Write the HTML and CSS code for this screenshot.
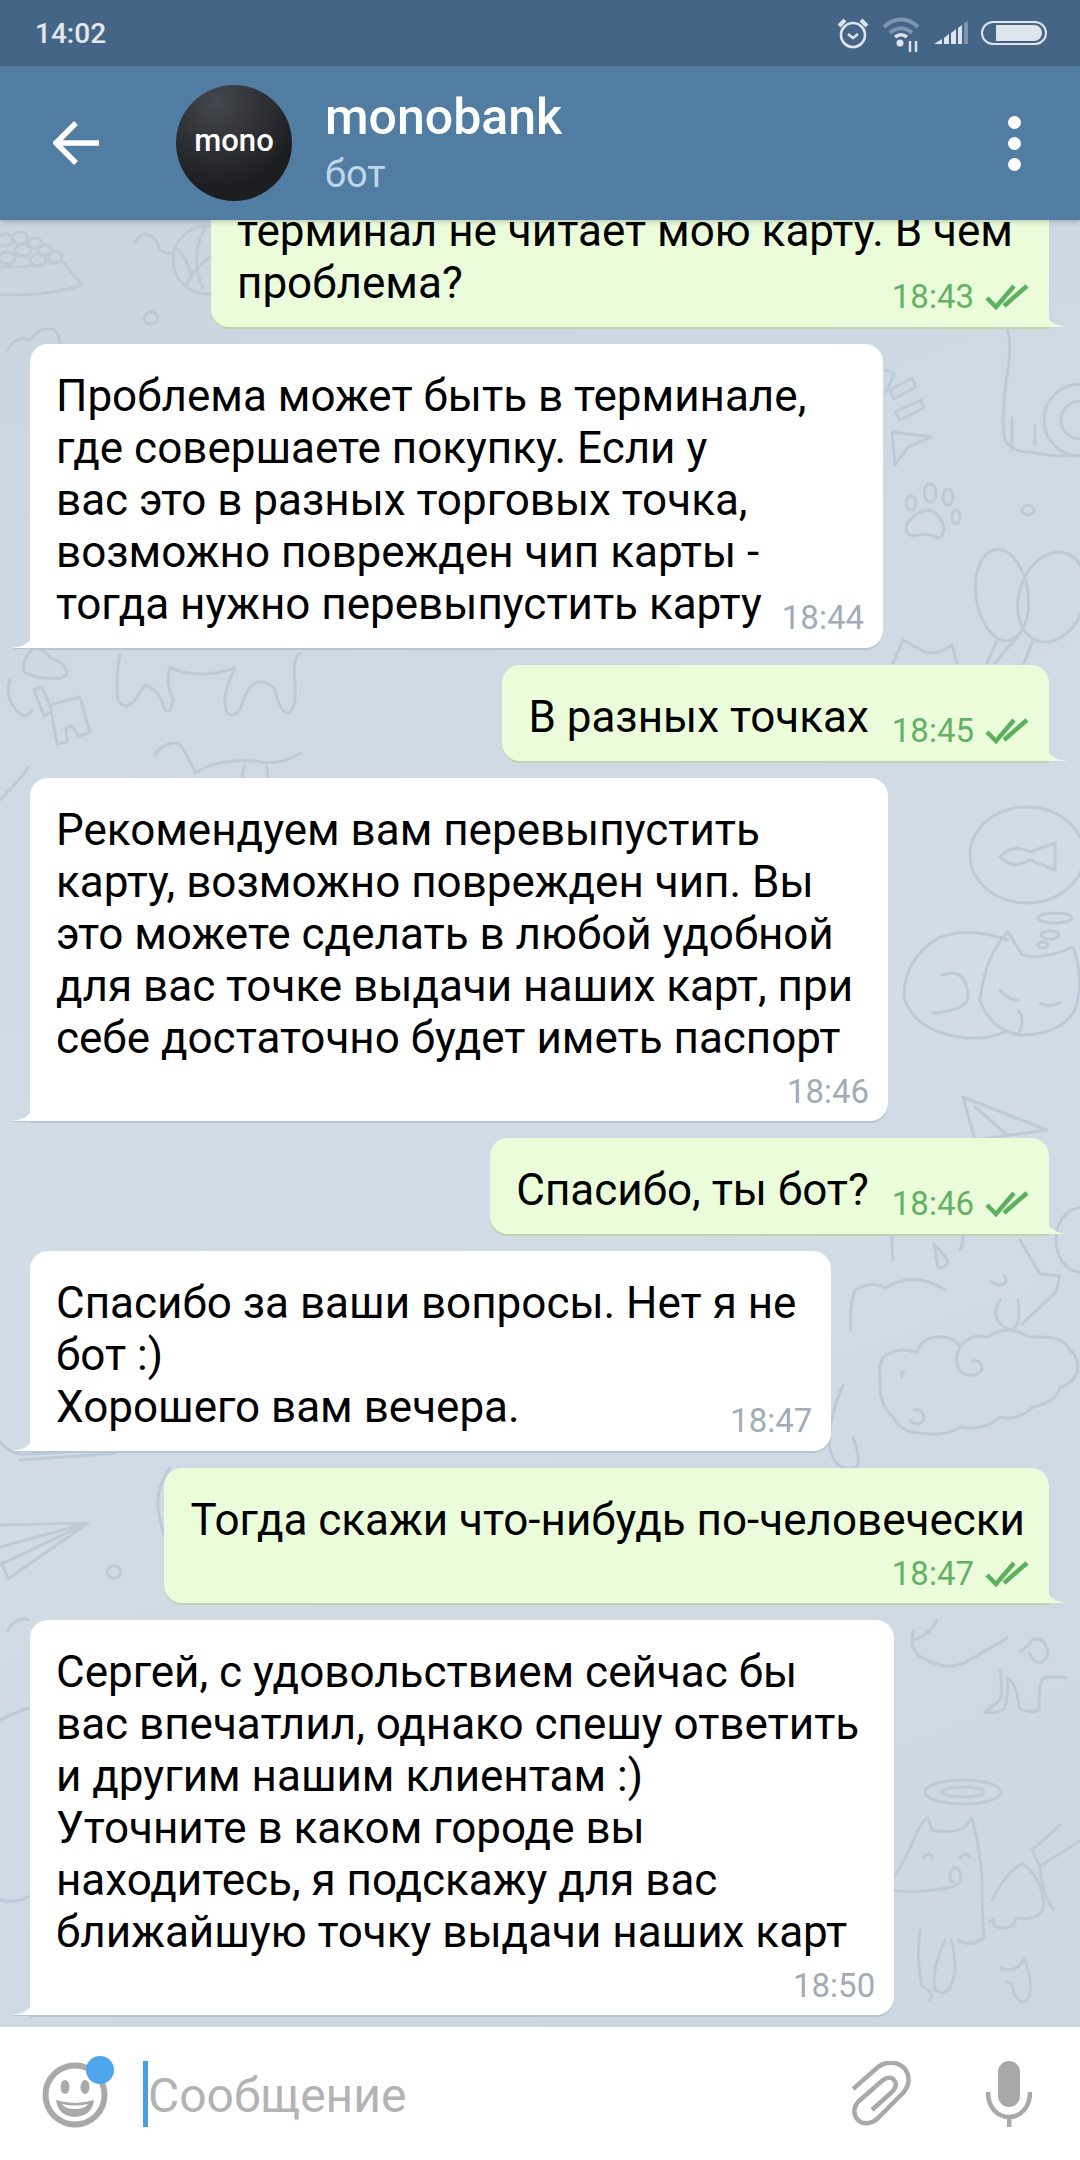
FILE: index.html
```html
<!DOCTYPE html>
<html lang="ru">
<head>
    <meta charset="UTF-8">
    <title>monobank</title>
    <link rel="stylesheet" href="styles.css">
</head>
<body>
    <div class="status-bar">
        <span class="clock">14:02</span>
        <div class="status-icons">
            <svg width="34" height="34" viewBox="0 0 34 34" fill="none" stroke="#dfe5ec">
                <circle cx="17" cy="19" r="12" stroke-width="2.6"/>
                <path d="M12 18l5 4 5-4" stroke-width="2.6"/>
                <path d="M3 10l6-6M31 10l-6-6" stroke-width="4"/>
            </svg>
            <svg width="38" height="38" viewBox="0 0 38 38" fill="none">
                <path d="M1 13c10-10 24-10 34 0" stroke="#7d95ad" stroke-width="4"/>
                <path d="M7 19c7-6 15-6 22 0" stroke="#7d95ad" stroke-width="4"/>
                <path d="M12 23c4-3 8-3 12 0" stroke="#dfe5ec" stroke-width="3.5"/>
                <circle cx="17" cy="29" r="3.5" fill="#dfe5ec"/>
                <path d="M27 27v11M33 27v11" stroke="#dfe5ec" stroke-width="2.5"/>
            </svg>
            <svg width="34" height="24" viewBox="0 0 34 24">
                <path d="M0 23l8-5v5zM10 17l5-4v10h-5zM17 12l5-4v15h-5zM24 7l4-3v19h-4z" fill="#dfe5ec"/>
                <path d="M30 2l4-2v23h-4z" fill="#7d95ad"/>
            </svg>
            <div class="battery"><div class="battery-fill"></div></div>
        </div>
    </div>

    <header class="top-bar">
        <svg class="back" width="46" height="44" viewBox="0 0 46 44" fill="none" stroke="#fff" stroke-width="5.5">
            <path d="M46 22H4M23 2L3 22l20 20"/>
        </svg>
        <div class="avatar">mono</div>
        <div class="peer">
            <div class="peer-name">monobank</div>
            <div class="peer-status">бот</div>
        </div>
        <div class="dots"><i></i><i></i><i></i></div>
    </header>

    <main class="chat">
        <svg class="doodles" viewBox="0 220 1080 1807" fill="none" stroke="#bdcbd8" stroke-width="3" stroke-linecap="round" stroke-linejoin="round">
            <!-- bowl and yarn -->
            <path d="M0 267q30 1 62-6l20 24q-32 11-82 10"/>
            <ellipse cx="7" cy="258" rx="8" ry="6"/><ellipse cx="23" cy="250" rx="8" ry="6"/><ellipse cx="38" cy="260" rx="8" ry="6"/>
            <ellipse cx="20" cy="238" rx="8" ry="6"/><ellipse cx="35" cy="243" rx="7" ry="5"/><ellipse cx="45" cy="250" rx="7" ry="5"/>
            <ellipse cx="55" cy="257" rx="7" ry="6"/><ellipse cx="5" cy="240" rx="8" ry="6"/>
            <circle cx="207" cy="260" r="34"/>
            <path d="M135 243q5-11 15-8 8 5 10 15 5 5 13 2M205 228q-16 30-2 60M226 252q-28 6-40 34M176 248q10 6 16 30"/>
            <ellipse cx="151" cy="318" rx="7" ry="6"/>
            <path d="M8 350q7-15 22-10 10-15 25-10 7 10 5 20"/>
            <!-- fish bones, paw, cat leg -->
            <path d="M886 370l8 4-8 18M890 390l22-12 4 9-22 12zM895 412l26-12 3 8-24 12z"/>
            <path d="M892 432l39 5-23 10-13 18z"/>
            <path d="M908 522q14-16 26-10 14 12 8 24l-4 2q-12-6-24-2-12-2-6-14z"/>
            <ellipse cx="911" cy="503" rx="5" ry="7"/><ellipse cx="930" cy="493" rx="6" ry="9"/><ellipse cx="948" cy="497" rx="5" ry="8"/><ellipse cx="956" cy="517" rx="4" ry="7"/>
            <path d="M1007 330q5 10 1 40-8 50-3 70 7 12 25 12 30 6 50 3M1012 418v32M1035 425v20"/>
            <circle cx="1080" cy="420" r="36"/><circle cx="1080" cy="420" r="19"/>
            <ellipse cx="1028" cy="510" rx="6" ry="5"/>
            <ellipse cx="1002" cy="595" rx="26" ry="46" transform="rotate(-8 1002 595)"/>
            <ellipse cx="1052" cy="597" rx="33" ry="46" transform="rotate(18 1052 597)"/>
            <path d="M997 640l-10 23M1017 637l-22 26M1033 640l-9 23"/>
            <path d="M893 663l10-23 22 12q15 3 27-7l5 18"/>
            <!-- cat and fish -->
            <ellipse cx="1027" cy="855" rx="57" ry="48"/>
            <path d="M1000 857q12-14 30-5l25-9v27l-25-10q-18 10-30-3z"/>
            <ellipse cx="1055" cy="918" rx="17" ry="5"/><ellipse cx="1050" cy="935" rx="9" ry="4"/><ellipse cx="1043" cy="945" rx="5" ry="3"/>
            <path d="M1008 940q-40-14-70-2-35 22-34 60 10 30 50 38 30 6 50-4"/>
            <path d="M980 1000q5-45 28-68l14 23q23 5 51-8 12 33 2 63-15 25-55 25-30-5-40-35z"/>
            <path d="M1000 990q8 10 18 10M1040 1003q10 5 20 0M1018 1010q8 10 0 25"/>
            <path d="M942 975q24-8 26 20 2 15-35 18"/>
            <path d="M963 1097l84 33-72 10zM975 1107l30 26"/>
            <!-- dog on a cloud -->
            <path d="M880 1377q-2-20 10-24 12-6 27 0 5-18 27-16 12 2 16 10 10-14 27-10 18-12 36-3 4 4 24 3 18 2 23 13 10 8 7 23-6 12-17 14-4 16-27 20-14 14-33 10-14 14-40 10-14 10-40 6-18 0-27-16-12-10-13-30z"/>
            <path d="M960 1347q-8 14 2 26 14 6 20-4 0-10-10-8M902 1377q-2-8 2-4M910 1420q6 8 14 0 0-12-10-10"/>
            <path d="M855 1290q18-10 30-2 30-18 60 2M855 1290q-6 18-4 40M895 1218q-5 22-2 42M938 1268l-4-24 12 14q5 8-8 10zM960 1250q5-8 2-20M992 1282q8 6 14 0 0-6-2-6M1020 1240l20 34 20 2-4 16-34 32M1000 1300q-12 20 10 30 12-2 8-30M843 1385q-14 30-14 60 6 30 28 22 4-8-4-30"/>
            <ellipse cx="1080" cy="1240" rx="24" ry="32"/>
            <!-- dog, bone, halo and angel -->
            <path d="M913 1632q-4 20 10 26 26 16 50 0 24-14 34-20M1000 1670q3 20 0 30-12 10-15 12 14 2 20-4 4-20 2-30 10 4 12 30 10 6 20 2 0-30 5-32 12-2 22 0M1020 1652q8-6 12-12 10-4 14 6 6 8-4 16-8 2-12-8"/>
            <path d="M913 1640q16-4 24-20"/>
            <ellipse cx="963" cy="1792" rx="38" ry="12"/><ellipse cx="963" cy="1792" rx="21" ry="5"/>
            <path d="M892 1880q14-20 24-46 8-16 12-16l4 12q20 4 32-2l8-10q8 30 10 60 0 40 2 60-14 10-26 2"/>
            <path d="M892 1890q20 4 55-2 12-2 14-8 0-14-8-12-6 10 0 14M923 1858q6-8 10 0M960 1858q6-8 10 0"/>
            <path d="M992 1900q16-30 30-36 18 10 22 40-2 18-28 14-2 14-22 8 0-10-4-4M1000 1968q18 6 24-10 8 20 6 36-6 16-16 0-2-14-8-12"/>
            <path d="M920 1930q-4 30 2 56 12 6 8 14M945 1940q-14 30-10 50 16 10 20-20 0-20-4-30M1060 1825l-28 25 8 16 40-25M1040 1866q2 30 14 44"/>
            <!-- left side -->
            <path d="M120 655q-5 25-2 45 7 12 17 0l10-15q15 5 20 25 5 5 8-10-8-20-3-32 30 12 65 0-15 30-8 45 8 6 14-6 5-18 14-24 10-4 20 6 5 25 14 24 8-6 6-30-3-25 5-30"/>
            <path d="M24 672q-2-14 8-22l4-4q10 6 14 12 16 4 17 16l-6 4q-22 2-37-6zM34 690l8-3 10 24-8 5zM10 680q-6 18 8 32 8 8 14-2"/>
            <path d="M50 705l30-8 10 36-12 3-6-10-6 2 1 14-10 2z"/>
            <path d="M155 755q6-12 24-12 10 14 16 30 20-14 60-12 22 6 46-8M245 765q-8 16 10 22 16 2 12-20"/>
            <path d="M0 800q20-20 28-32"/>
            <path d="M0 1442q8 10 20 12 60 0 82-10l6-12q10 6 16 14-4 8-18 8-60 4-86 6"/>
            <path d="M0 1525l88-2-80 56-6-16M0 1547l88-24M0 1565l88-42"/>
            <ellipse cx="114" cy="1572" rx="7" ry="6"/>
            <path d="M170 1468q-14 20-12 40 4 30 14 42M8 1630q8-14 20-10M0 1720q20-10 30-12M0 1900q14 4 30-4"/>
        </svg>

        <div class="bubble out wide">
            <div>терминал не читает мою карту. В чем<br>
                <span class="meta"><span class="time">18:43</span><svg class="ticks" viewBox="0 0 44 26"><path d="M2 14l9 9L29 2M19 22L42 2"/></svg></span>проблема?</div>
        </div>

        <div class="bubble in">
            <div>Проблема может быть в терминале,<br>где совершаете покупку. Если у<br>вас это в разных торговых точка,<br>возможно поврежден чип карты -<br>
                <span class="meta"><span class="time">18:44</span></span>тогда нужно перевыпустить карту</div>
        </div>

        <div class="bubble out">
            <div><span class="meta"><span class="time">18:45</span><svg class="ticks" viewBox="0 0 44 26"><path d="M2 14l9 9L29 2M19 22L42 2"/></svg></span>В разных точках</div>
        </div>

        <div class="bubble in">
            <div>Рекомендуем вам перевыпустить<br>карту, возможно поврежден чип. Вы<br>это можете сделать в любой удобной<br>для вас точке выдачи наших карт, при<br>себе достаточно будет иметь паспорт</div>
            <div class="meta below"><span class="time">18:46</span></div>
        </div>

        <div class="bubble out">
            <div><span class="meta"><span class="time">18:46</span><svg class="ticks" viewBox="0 0 44 26"><path d="M2 14l9 9L29 2M19 22L42 2"/></svg></span>Спасибо, ты бот?</div>
        </div>

        <div class="bubble in">
            <div>Спасибо за ваши вопросы. Нет я не<br>бот :)<br>
                <span class="meta"><span class="time">18:47</span></span>Хорошего вам вечера.</div>
        </div>

        <div class="bubble out">
            <div>Тогда скажи что-нибудь по-человечески</div>
            <div class="meta below"><span class="time">18:47</span><svg class="ticks" viewBox="0 0 44 26"><path d="M2 14l9 9L29 2M19 22L42 2"/></svg></div>
        </div>

        <div class="bubble in">
            <div>Сергей, с удовольствием сейчас бы<br>вас впечатлил, однако спешу ответить<br>и другим нашим клиентам :)<br>Уточните в каком городе вы<br>находитесь, я подскажу для вас<br>ближайшую точку выдачи наших карт</div>
            <div class="meta below"><span class="time">18:50</span></div>
        </div>
    </main>

    <footer class="composer">
        <div class="smile-wrap">
            <svg width="66" height="66" viewBox="0 0 66 66">
                <circle cx="33" cy="33" r="29.5" fill="none" stroke="#a9a9a9" stroke-width="6"/>
                <ellipse cx="23" cy="25" rx="4.5" ry="7" fill="#a9a9a9"/>
                <ellipse cx="43" cy="25" rx="4.5" ry="7" fill="#a9a9a9"/>
                <path d="M14 38q19 6 38 0q-2 16-19 17q-17-1-19-17z" fill="#a9a9a9"/>
                <path d="M20 42q13 3 26 0q-3 5-13 5q-10 0-13-5z" fill="#fff"/>
            </svg>
            <span class="smile-dot"></span>
        </div>
        <div class="input">
            <span class="caret"></span>
            <span class="placeholder">Сообщение</span>
        </div>
        <svg class="clip" width="60" height="66" viewBox="0 0 60 66" fill="none" stroke="#a9a9a9" stroke-width="4.5">
            <path d="M1 28L26 6c9-7 21-5 27 2 6 8 4 18-3 25L25 58c-6 5-14 6-19 1-5-5-5-13 1-19L31 19c4-3 9-3 11 0 3 3 2 7-1 11L20 49"/>
        </svg>
        <svg class="mic" width="46" height="66" viewBox="0 0 46 66">
            <rect x="12" y="0" width="22" height="46" rx="11" fill="#a9a9a9"/>
            <path d="M2 31c0 16 10 25 21 25s21-9 21-25" fill="none" stroke="#a9a9a9" stroke-width="4.5"/>
            <rect x="21" y="55" width="4.5" height="11" fill="#a9a9a9"/>
        </svg>
    </footer>
</body>
</html>
```

FILE: styles.css
```css
body {
    font-family: Roboto, sans-serif;
    margin: 0;
    padding: 0;
    width: 1080px;
    height: 2160px;
    display: flex;
    flex-direction: column;
    overflow: hidden;
    background-color: white;
}

/* status bar */
.status-bar {
    height: 66px;
    flex: none;
    background-color: #456587;
    color: #e3e8ee;
    display: flex;
    justify-content: space-between;
    align-items: center;
    padding: 0 33px 0 35px;
}
.clock {
    font-size: 28px;
    font-weight: 500;
}
.status-icons {
    display: flex;
    align-items: center;
    gap: 13px;
}
.battery {
    box-sizing: border-box;
    width: 66px;
    height: 24px;
    border: 2px solid #dfe5ec;
    border-radius: 12px;
    padding: 2px 3px 2px 13px;
}
.battery-fill {
    height: 100%;
    background-color: #dfe5ec;
    border-radius: 0 10px 10px 0;
}

/* header */
.top-bar {
    height: 154px;
    flex: none;
    background-color: #527da3;
    display: flex;
    align-items: center;
    position: relative;
    z-index: 2;
    box-shadow: 0 2px 5px rgba(0, 0, 0, 0.2);
}
.back {
    margin-left: 53px;
    flex: none;
}
.avatar {
    box-sizing: border-box;
    width: 116px;
    height: 116px;
    margin-left: 77px;
    padding-bottom: 5px;
    flex: none;
    border-radius: 50%;
    background: radial-gradient(circle at 35% 15%, #44474d, #1b1d21 70%);
    color: white;
    font-size: 31px;
    font-weight: 500;
    display: flex;
    align-items: center;
    justify-content: center;
}
.peer {
    margin-left: 33px;
    flex: 1;
}
.peer-name {
    color: white;
    font-size: 50px;
    font-weight: 500;
    line-height: 62px;
}
.peer-status {
    color: #c0d6ea;
    font-size: 38px;
    line-height: 52px;
}
.dots {
    display: flex;
    flex-direction: column;
    gap: 8px;
    margin-right: 59px;
}
.dots i {
    display: block;
    width: 13px;
    height: 13px;
    border-radius: 50%;
    background-color: white;
}

/* messages */
.chat {
    flex: 1;
    min-height: 0;
    position: relative;
    overflow: hidden;
    background: linear-gradient(160deg, #c9d6e1, #d2dce6 50%, #ccd7e2);
    display: flex;
    flex-direction: column;
    justify-content: flex-end;
    gap: 17px;
    padding-bottom: 12px;
}
.doodles {
    position: absolute;
    left: 0;
    top: 0;
    width: 1080px;
    height: 100%;
}
.bubble {
    position: relative;
    flex: none;
    font-size: 44px;
    line-height: 52px;
    color: black;
    padding: 26px 0 18px;
}
.bubble.in {
    align-self: flex-start;
    margin-left: 30px;
    padding-left: 26px;
    padding-right: 35px;
    background-color: white;
    border-radius: 18px 18px 18px 0;
    box-shadow: 0 2px 0 #b7c5d2;
}
.bubble.out {
    align-self: flex-end;
    margin-right: 31px;
    padding-left: 26px;
    padding-right: 24px;
    background-color: #ebfcdb;
    border-radius: 18px 18px 0 18px;
    box-shadow: 0 2px 0 #bcd5ae;
}
.bubble.out.wide {
    padding-right: 36px;
}
/* tails */
.bubble::after {
    content: "";
    position: absolute;
    bottom: 0;
    width: 17px;
    height: 24px;
}
.bubble.in::after {
    left: -17px;
    background: radial-gradient(circle at 0 0, transparent 23px, white 24px);
    box-shadow: 0 2px 0 -1px #b7c5d2;
}
.bubble.out::after {
    right: -17px;
    background: radial-gradient(circle at 100% 0, transparent 23px, #ebfcdb 24px);
}

.meta {
    float: right;
    display: flex;
    align-items: center;
    height: 40px;
    line-height: 40px;
    margin: 20px -16px -8px 20px;
    font-size: 33px;
}
.meta.below {
    float: none;
    justify-content: flex-end;
    margin: 8px -16px -9px 0;
}
.in .time {
    color: #a1acb6;
}
.out .time {
    color: #64b165;
}
.out .meta {
    margin-left: 23px;
    margin-right: -4px;
}
.out.wide .meta {
    margin-right: -16px;
}
.ticks {
    width: 44px;
    height: 26px;
    margin-left: 11px;
    fill: none;
    stroke: #5cb05e;
    stroke-width: 4.5;
}

/* composer */
.composer {
    height: 133px;
    flex: none;
    background-color: white;
    display: flex;
    align-items: center;
    position: relative;
}
.smile-wrap {
    position: relative;
    margin-left: 42px;
    margin-top: 2px;
    width: 66px;
    height: 66px;
    flex: none;
}
.smile-dot {
    position: absolute;
    left: 44px;
    top: -6px;
    width: 28px;
    height: 28px;
    border-radius: 50%;
    background-color: #4fa6ec;
}
.input {
    flex: 1;
    margin-left: 35px;
    display: flex;
    align-items: center;
}
.caret {
    width: 5px;
    height: 66px;
    background-color: #4a9fe0;
    flex: none;
}
.placeholder {
    font-size: 48px;
    color: #b3b3b3;
    padding-top: 4px;
}
.clip {
    flex: none;
    margin-right: 74px;
}
.mic {
    flex: none;
    margin-right: 48px;
}
```
